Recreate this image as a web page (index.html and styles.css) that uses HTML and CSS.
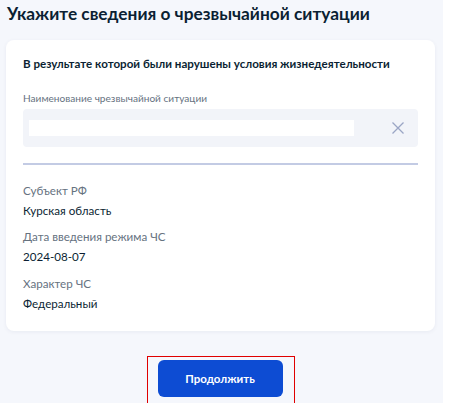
FILE: index.html
```html
<!DOCTYPE html>
<html lang="ru">
<head>
<meta charset="utf-8">
<title>Сведения о ЧС</title>
<link rel="stylesheet" href="styles.css">
</head>
<body>
<div class="page">
  <h1 class="title">Укажите сведения о чрезвычайной ситуации</h1>
  <div class="card">
    <h2 class="card-heading">В результате которой были нарушены условия жизнедеятельности</h2>
    <div class="input-label">Наименование чрезвычайной ситуации</div>
    <div class="input">
      <div class="input-value"></div>
      <svg class="clear-icon" width="12" height="12" viewBox="0 0 12 12">
        <path d="M0.5 0.5 L11.5 11.5 M11.5 0.5 L0.5 11.5" stroke="#9ba5c5" stroke-width="1.3" fill="none"/>
      </svg>
    </div>
    <div class="divider"></div>
    <div class="field">
      <div class="field-label">Субъект РФ</div>
      <div class="field-value">Курская область</div>
    </div>
    <div class="field">
      <div class="field-label">Дата введения режима ЧС</div>
      <div class="field-value">2024-08-07</div>
    </div>
    <div class="field">
      <div class="field-label">Характер ЧС</div>
      <div class="field-value">Федеральный</div>
    </div>
  </div>
  <div class="actions">
    <div class="highlight">
      <button class="btn-primary">Продолжить</button>
    </div>
  </div>
</div>
</body>
</html>
```
FILE: styles.css
```css
* { box-sizing: border-box; }
html, body { margin: 0; padding: 0; background: #ffffff; }
body { font-family: Lato, "Noto Sans", sans-serif; color: #0b1f33; }

.page {
  width: 443px;
  height: 403px;
  background: #f5f7fc;
  padding: 2px 8px 0 6px;
}

.title {
  margin: 0 0 0 1px;
  font-size: 17.3px;
  line-height: 24px;
  font-weight: 700;
  color: #0b1f33;
}

.card {
  margin-top: 14px;
  width: 429px;
  background: #ffffff;
  border-radius: 8px;
  box-shadow: 0 1px 4px rgba(20, 40, 90, 0.06);
  padding: 16px 17px 17px 17px;
}

.card-heading {
  margin: 0;
  font-size: 11.6px;
  line-height: 16px;
  font-weight: 700;
  color: #0b1f33;
}

.input-label {
  margin-top: 19px;
  font-size: 10.1px;
  line-height: 14px;
  color: #66727f;
}

.input {
  margin-top: 4px;
  height: 38px;
  background: #f2f4f9;
  border-radius: 4px;
  display: flex;
  align-items: center;
  justify-content: space-between;
  padding: 0 14px 0 6px;
}

.input-value {
  width: 325px;
  height: 16px;
  background: #ffffff;
}

.clear-icon { display: block; }

.divider {
  margin-top: 16px;
  height: 2px;
  background: #c3cbe4;
}

.field { margin-top: 6.5px; }
.divider + .field { margin-top: 15.5px; }

.field-label {
  font-size: 11.6px;
  line-height: 20px;
  color: #66727f;
}

.field-value {
  font-size: 11.6px;
  line-height: 20px;
  color: #0b1f33;
}

.actions {
  margin-top: 25px;
  display: flex;
  justify-content: center;
}

.highlight {
  border: 1px solid #e00000;
  padding: 3px 11px 6px 10px;
}

.btn-primary {
  display: block;
  width: 125px;
  height: 37px;
  border: none;
  border-radius: 6px;
  background: #0d4cd3;
  color: #ffffff;
  font-family: Lato, "Noto Sans", sans-serif;
  font-size: 11.5px;
  font-weight: 700;
  padding: 0;
}
```
